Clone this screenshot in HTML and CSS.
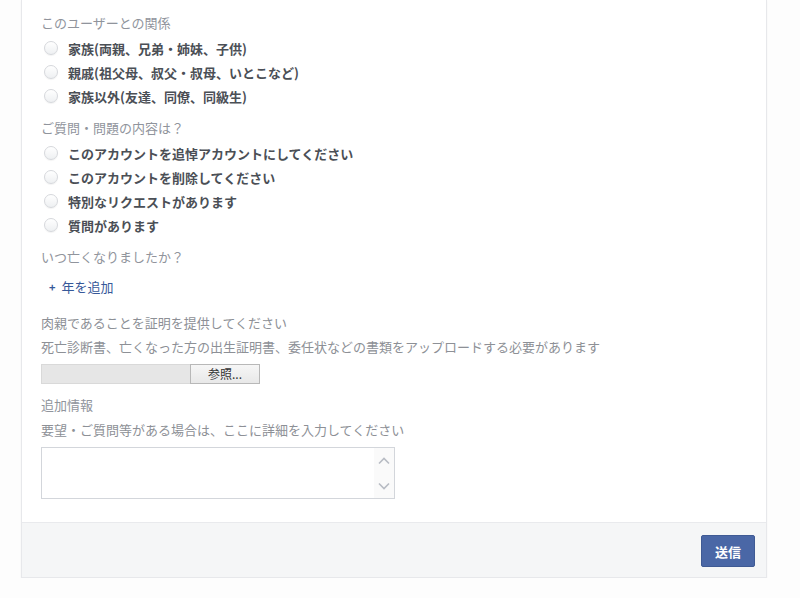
FILE: index.html
```html
<!DOCTYPE html>
<html lang="ja">
<head>
<meta charset="utf-8">
<link rel="stylesheet" href="styles.css">
</head>
<body>
<div class="card">
  <div class="body">
    <div class="q">このユーザーとの関係</div>
    <div class="opts">
      <label class="opt"><span class="radio"></span>家族(両親、兄弟・姉妹、子供)</label>
      <label class="opt"><span class="radio"></span>親戚(祖父母、叔父・叔母、いとこなど)</label>
      <label class="opt"><span class="radio"></span>家族以外(友達、同僚、同級生)</label>
    </div>
    <div class="q q2">ご質問・問題の内容は？</div>
    <div class="opts">
      <label class="opt"><span class="radio"></span>このアカウントを追悼アカウントにしてください</label>
      <label class="opt"><span class="radio"></span>このアカウントを削除してください</label>
      <label class="opt"><span class="radio"></span>特別なリクエストがあります</label>
      <label class="opt"><span class="radio"></span>質問があります</label>
    </div>
    <div class="q q2">いつ亡くなりましたか？</div>
    <a class="add"><span class="plus">+</span>年を追加</a>
    <div class="q q3">肉親であることを証明を提供してください</div>
    <div class="q desc">死亡診断書、亡くなった方の出生証明書、委任状などの書類をアップロードする必要があります</div>
    <div class="file"><span class="field"></span><span class="browse">参照...</span></div>
    <div class="q q4">追加情報</div>
    <div class="q desc2">要望・ご質問等がある場合は、ここに詳細を入力してください</div>
    <div class="ta">
      <textarea class="text"></textarea>
      <div class="sb">
        <svg width="14" height="10" viewBox="0 0 14 10"><path d="M2 7.5 L7 2.5 L12 7.5" fill="none" stroke="#b8bcc4" stroke-width="1.6"/></svg>
        <svg width="14" height="10" viewBox="0 0 14 10"><path d="M2 2.5 L7 7.5 L12 2.5" fill="none" stroke="#b8bcc4" stroke-width="1.6"/></svg>
      </div>
    </div>
  </div>
  <div class="foot">
    <button class="send">送信</button>
  </div>
</div>
</body>
</html>
```
FILE: styles.css
```css
html, body {
  margin: 0;
  padding: 0;
  background: #fdfdfd;
}
body {
  font-family: "Noto Sans CJK JP", "Noto Sans", sans-serif;
  font-size: 13px;
  color: #4b4f56;
}
.card {
  margin-left: 21px;
  width: 744px;
  background: #fff;
  border: 1px solid #e7e8eb;
  border-top: none;
  box-shadow: 0 1px 2px rgba(0,0,0,0.04);
}
.body {
  padding: 14px 20px 23px 19px;
  display: flex;
  flex-direction: column;
  align-items: flex-start;
}
.q {
  line-height: 18px;
  color: #90949c;
  white-space: nowrap;
}
.q2 { margin-top: 11px; }
.q3 { margin-top: 18px; color: #8d9096; }
.q4 { margin-top: 12px; }
.desc { margin-top: 6px; color: #8d9096; }
.desc2 { margin-top: 7px; color: #8d9096; }
.opts {
  margin-top: 4px;
  display: flex;
  flex-direction: column;
}
.opt {
  height: 24px;
  display: flex;
  align-items: center;
  font-weight: bold;
  color: #4b4f56;
  white-space: nowrap;
}
.radio {
  width: 12px;
  height: 12px;
  margin-left: 3px;
  margin-right: 10px;
  border-radius: 50%;
  border: 1px solid #d6d8dc;
  background: linear-gradient(#ffffff, #eef0f2);
  box-shadow: 0 1px 1px rgba(0,0,0,0.05);
}
.add {
  margin-top: 12px;
  line-height: 18px;
  color: #365899;
  display: flex;
  align-items: center;
}
.plus {
  margin-left: 8px;
  margin-right: 6px;
  font-size: 11px;
  font-weight: bold;
}
.file {
  margin-top: 8px;
  display: flex;
  height: 20px;
}
.field {
  width: 148px;
  background: #e6e6e6;
  border: 1px solid #d9d9d9;
  border-right: none;
}
.browse {
  width: 68px;
  border: 1px solid #b8b8b8;
  background: linear-gradient(#f6f6f6, #e8e8e8);
  font-size: 12px;
  line-height: 18px;
  text-align: center;
  color: #333;
}
.ta {
  margin-top: 8px;
  width: 352px;
  height: 50px;
  border: 1px solid #d3d6db;
  display: flex;
  background: #fff;
}
.text {
  flex: 1;
  border: none;
  resize: none;
  outline: none;
  margin: 0;
  padding: 0;
}
.sb {
  width: 20px;
  background: #fafafa;
  display: flex;
  flex-direction: column;
  justify-content: space-between;
  align-items: center;
  padding: 8px 0 7px;
}
.foot {
  height: 54px;
  background: #f5f6f7;
  border-top: 1px solid #e9eaed;
  display: flex;
  justify-content: flex-end;
  align-items: flex-start;
  padding: 0 11px 0 0;
}
.send {
  margin-top: 12px;
  width: 54px;
  height: 32px;
  background: #4a67a6;
  border: 1px solid #3f5a94;
  border-radius: 2px;
  color: #fff;
  font-family: "Noto Sans CJK JP", sans-serif;
  font-size: 13px;
  font-weight: bold;
  padding: 0;
}
```
